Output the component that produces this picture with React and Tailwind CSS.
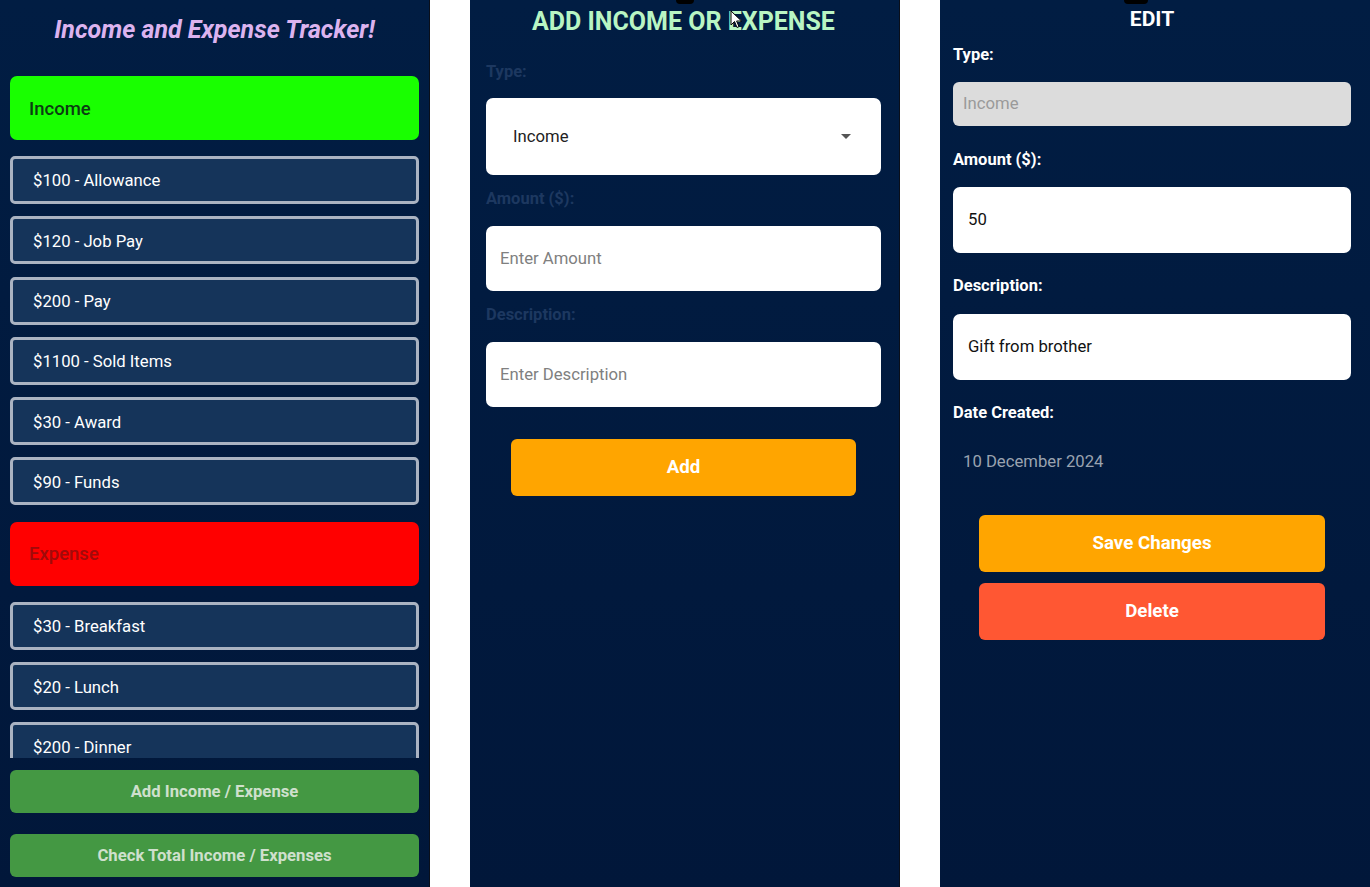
import React from 'react';

const incomes = ['$100 - Allowance', '$120 - Job Pay', '$200 - Pay', '$1100 - Sold Items', '$30 - Award', '$90 - Funds'];
const expenses = ['$30 - Breakfast', '$20 - Lunch', '$200 - Dinner'];

const Item = ({ label }) => (
    <div className="h-[48px] mb-[12.3px] shrink-0 rounded-[5px] border-[3px] border-[#aab3c2] bg-[#15345a] flex items-center pl-[20px] pt-[2px] text-[16.7px] text-white">
        {label}
    </div>
);

const Notch = ({ className }) => (
    <div className={`absolute top-0 h-[4px] w-[18px] rounded-b-full bg-black ${className}`}></div>
);

const Tracker = () => (
    <div className="w-[430px] h-full flex flex-col px-[10px] bg-gradient-to-b from-[#011d43] to-[#01173a] border-r border-[#0a0f1a]">
        <h1 className="mt-[15px] h-[30px] leading-[30px] text-center text-[25px] font-bold italic text-[#dcb3ef]">
            Income and Expense Tracker!
        </h1>

        {/* Scrollable list */}
        <div className="mt-[31px] h-[682px] overflow-hidden flex flex-col">
            <div className="h-[64px] mb-[16px] shrink-0 rounded-[7px] bg-[#19ff00] flex items-center pl-[19px] pt-[3px] text-[18.5px] font-medium text-[#0b3d12]">
                Income
            </div>
            {incomes.map((l) => <Item key={l} label={l} />)}
            <div className="h-[64px] mt-[4px] mb-[16px] shrink-0 rounded-[7px] bg-[#ff0000] flex items-center pl-[19px] pt-[3px] text-[18.5px] font-medium text-[#a10a0a]">
                Expense
            </div>
            {expenses.map((l) => <Item key={l} label={l} />)}
        </div>

        <button className="mt-[12px] h-[43px] rounded-[6px] bg-[#449843] text-[16.7px] font-bold text-[#cfe0cd]">
            Add Income / Expense
        </button>
        <button className="mt-[21px] h-[43px] rounded-[6px] bg-[#449843] text-[16.7px] font-bold text-[#cfe0cd]">
            Check Total Income / Expenses
        </button>
    </div>
);

const AddForm = () => (
    <div className="relative w-[430px] h-full flex flex-col pl-[16px] pr-[18px] bg-gradient-to-b from-[#011d43] to-[#01173a] border-r border-[#0a0f1a]">
        <Notch className="left-[206px]" />
        {/* mouse cursor */}
        <svg className="absolute left-[260px] top-[10px]" width="13" height="19" viewBox="0 0 13 19">
            <path d="M1 1 L1 15 L4.5 11.5 L7 17.5 L9 16.6 L6.6 11 L11.5 11 Z" fill="#fff" stroke="#000" strokeWidth="1" />
        </svg>
        <h2 className="mt-[7px] h-[30px] leading-[30px] text-center text-[25px] font-bold text-[#b9f5c3]">
            ADD INCOME OR EXPENSE
        </h2>
        <label className="mt-[25px] h-[20px] leading-[20px] text-[16.5px] font-bold text-[#1d3860]">Type:</label>
        <div className="mt-[16px] h-[77px] rounded-[7px] bg-white flex items-center justify-between pl-[27px] pr-[30px]">
            <span className="text-[16.7px] text-[#222]">Income</span>
            <svg width="10" height="5" viewBox="0 0 10 5"><path d="M0 0 L10 0 L5 5 Z" fill="#555" /></svg>
        </div>
        <label className="mt-[14px] h-[20px] leading-[20px] text-[16.5px] font-bold text-[#1d3860]">Amount ($):</label>
        <div className="mt-[17px] h-[65px] rounded-[7px] bg-white flex items-center pl-[14px] text-[16.7px] text-[#808080]">
            Enter Amount
        </div>
        <label className="mt-[14px] h-[20px] leading-[20px] text-[16.5px] font-bold text-[#1d3860]">Description:</label>
        <div className="mt-[17px] h-[65px] rounded-[7px] bg-white flex items-center pl-[14px] text-[16.7px] text-[#808080]">
            Enter Description
        </div>
        <button className="mt-[32px] mx-[25px] h-[57px] rounded-[6px] bg-[#ffa500] text-[18.7px] font-bold text-white">
            Add
        </button>
    </div>
);

const EditForm = () => (
    <div className="relative w-[430px] h-full flex flex-col pl-[13px] pr-[19px] bg-gradient-to-b from-[#011d43] to-[#01173a]">
        <Notch className="left-[184px] w-[24px]" />
        <h2 className="mt-[7px] h-[24px] leading-[24px] text-center text-[21px] font-bold text-white">EDIT</h2>
        <label className="mt-[14px] h-[20px] leading-[20px] text-[16.5px] font-bold text-white">Type:</label>
        <div className="mt-[17px] h-[44px] rounded-[6px] bg-[#dcdcdc] flex items-center pl-[10px] text-[16.7px] text-[#9a9a9a]">
            Income
        </div>
        <label className="mt-[24px] h-[20px] leading-[20px] text-[16.5px] font-bold text-white">Amount ($):</label>
        <div className="mt-[17px] h-[66px] rounded-[7px] bg-white flex items-center pl-[15px] text-[16.7px] text-[#111]">
            50
        </div>
        <label className="mt-[23px] h-[20px] leading-[20px] text-[16.5px] font-bold text-white">Description:</label>
        <div className="mt-[18px] h-[66px] rounded-[7px] bg-white flex items-center pl-[15px] text-[16.7px] text-[#111]">
            Gift from brother
        </div>
        <label className="mt-[23px] h-[20px] leading-[20px] text-[16.5px] font-bold text-white">Date Created:</label>
        <div className="mt-[29px] h-[20px] leading-[20px] pl-[10px] text-[16.7px] text-[#9aa3b0]">10 December 2024</div>
        <button className="mt-[43px] mx-[26px] h-[57px] rounded-[6px] bg-[#ffa500] text-[18.7px] font-bold text-white">
            Save Changes
        </button>
        <button className="mt-[11px] mx-[26px] h-[57px] rounded-[6px] bg-[#ff5733] text-[18.7px] font-bold text-white">
            Delete
        </button>
    </div>
);

const App = () => (
    <div className="w-[1370px] h-[887px] flex gap-[40px] bg-white overflow-hidden font-['Roboto',sans-serif]">
        <Tracker />
        <AddForm />
        <EditForm />
    </div>
);

export default App;
